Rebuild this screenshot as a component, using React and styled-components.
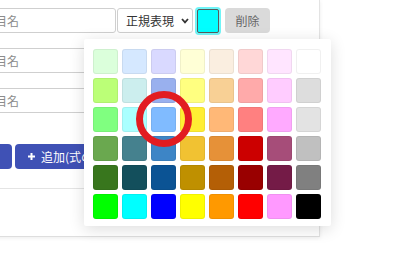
import React from 'react'
import styled, { createGlobalStyle } from 'styled-components'

const palette = [
  ['#dbffdb', '#d5e8ff', '#d9d9ff', '#ffffd6', '#faeee0', '#ffd7d7', '#ffe5ff', '#ffffff'],
  ['#bbff77', '#cceeee', '#99b0ee', '#ffff80', '#f8d095', '#ffaaaa', '#ffccff', '#dddddd'],
  ['#80ff80', '#aaffff', '#80bbff', '#ffee33', '#ffb877', '#ff8080', '#ffaaff', '#e3e3e3'],
  ['#6aa84f', '#45818e', '#3d85c6', '#f1c232', '#e69138', '#cc0000', '#a64d79', '#c0c0c0'],
  ['#38761d', '#134f5c', '#0b5394', '#bf9000', '#b45f06', '#990000', '#741b47', '#808080'],
  ['#00ff00', '#00ffff', '#0000ff', '#ffff00', '#ff9900', '#ff0000', '#ff99ff', '#000000'],
]

const GlobalStyle = createGlobalStyle`
  body {
    margin: 0;
    background: #fff;
    font-family: "Noto Sans CJK JP", "Noto Sans", sans-serif;
    overflow: hidden;
  }
`

const Page = styled.div`
  position: relative;
  width: 400px;
  height: 259px;
  overflow: hidden;
`

const Card = styled.div`
  margin-left: -40px;
  width: 360px;
  height: 237px;
  box-sizing: border-box;
  border-right: 1px solid #e3e3e3;
  border-bottom: 1px solid #dedede;
  box-shadow: 0 1px 4px rgba(0, 0, 0, 0.08);
  background: #fff;
`

const Body = styled.div`
  padding: 8px 0 0 14px;
  display: flex;
  flex-direction: column;
`

const Rows = styled.div`
  display: flex;
  flex-direction: column;
  gap: 15px;
`

const Row = styled.div`
  display: flex;
  align-items: center;
  height: 25px;
`

const TextInput = styled.input`
  width: 142px;
  height: 25px;
  box-sizing: border-box;
  border: 1px solid #cfcfcf;
  border-radius: 3px;
  padding: 0 8px;
  font-family: inherit;
  font-size: 12px;
  color: #333;
  background: #fff;
  outline: none;
  &::placeholder {
    color: #8c8c8c;
  }
`

const SelectBox = styled.div`
  margin-left: 1px;
  width: 76px;
  height: 25px;
  box-sizing: border-box;
  border: 1px solid #cfcfcf;
  border-radius: 3px;
  padding: 0 3px 0 8px;
  display: flex;
  align-items: center;
  justify-content: space-between;
  font-size: 12px;
  color: #333;
  background: #fff;
`

const ColorWell = styled.div`
  margin-left: 4px;
  width: 22px;
  height: 24px;
  box-sizing: border-box;
  border: 1px solid #5a5a5a;
  border-radius: 2px;
  background: ${p => p.$color};
  box-shadow: 0 0 0 2px ${p => (p.$focused ? '#70f4f7' : 'transparent')};
`

const DeleteButton = styled.button`
  margin-left: 6px;
  width: 45px;
  height: 25px;
  border: none;
  border-radius: 4px;
  background: #dadada;
  color: #666;
  font-family: inherit;
  font-size: 12px;
  padding: 0;
`

const ButtonRow = styled.div`
  margin-top: 31px;
  display: flex;
  gap: 3px;
`

const PrimaryButton = styled.button`
  height: 25px;
  width: ${p => (p.$width ? `${p.$width}px` : 'auto')};
  border: none;
  border-radius: 4px;
  background: #3f51b5;
  color: #fff;
  font-family: inherit;
  font-size: 12px;
  padding: 0 12px;
  display: flex;
  align-items: center;
  gap: 5px;
  white-space: nowrap;
  overflow: hidden;
`

const Divider = styled.div`
  margin-top: 19px;
  height: 1px;
  background: #e4e4e4;
`

const Palette = styled.div`
  position: absolute;
  left: 84px;
  top: 39px;
  padding: 10px 10px 7px 9px;
  background: #fff;
  border-radius: 2px;
  box-shadow: 0 3px 16px rgba(0, 0, 0, 0.14);
  display: grid;
  grid-template-columns: repeat(8, 25px);
  grid-auto-rows: 25px;
  gap: 4px;
`

const Swatch = styled.div`
  border-radius: 3px;
  background: ${p => p.$color};
  box-shadow: inset 0 0 0 1px rgba(0, 0, 0, 0.06);
`

const Highlight = styled.div`
  position: absolute;
  left: 52px;
  top: 52px;
  width: 56px;
  height: 56px;
  box-sizing: border-box;
  border: 7px solid #e21c21;
  border-radius: 50%;
  pointer-events: none;
`

const Chevron = () => (
  <svg width="8" height="6" viewBox="0 0 8 6">
    <polyline points="1,1 4,4.3 7,1" fill="none" stroke="#333" strokeWidth="1.8" />
  </svg>
)

const PlusIcon = () => (
  <svg width="9" height="9" viewBox="0 0 9 9">
    <path d="M4.5 1v7M1 4.5h7" stroke="#fff" strokeWidth="2" />
  </svg>
)

function ConditionRow({ focused }) {
  return (
    <Row>
      <TextInput placeholder="項目名" readOnly />
      <SelectBox>
        <span>正規表現</span>
        <Chevron />
      </SelectBox>
      <ColorWell $color="#00ffff" $focused={focused} />
      <DeleteButton>削除</DeleteButton>
    </Row>
  )
}

export default function App() {
  return (
    <Page>
      <GlobalStyle />
      <Card>
        <Body>
          <Rows>
            <ConditionRow focused />
            <ConditionRow />
            <ConditionRow />
          </Rows>
          <ButtonRow>
            <PrimaryButton $width={38} aria-label="戻る" />
            <PrimaryButton>
              <PlusIcon />
              追加(式の条件)
            </PrimaryButton>
          </ButtonRow>
        </Body>
        <Divider />
      </Card>
      <Palette>
        {palette.flat().map((c, i) => (
          <Swatch key={i} $color={c} />
        ))}
        <Highlight />
      </Palette>
    </Page>
  )
}
